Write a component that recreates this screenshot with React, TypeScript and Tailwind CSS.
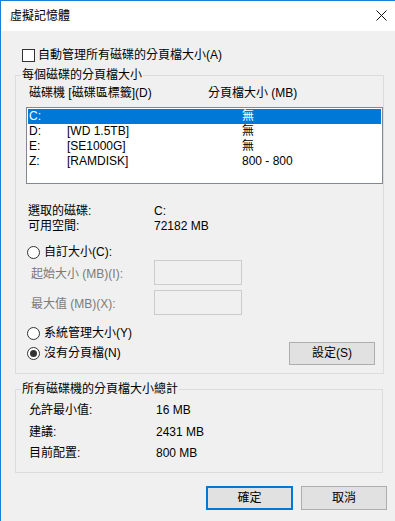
const FONT = "font-['Liberation_Sans','Noto_Sans_CJK_TC',sans-serif]";

function CheckBox() {
  return <span className="inline-block h-[13px] w-[13px] border border-[#333333] bg-white" />;
}

function Radio({ checked }: { checked?: boolean }) {
  return (
    <span className="flex h-[13px] w-[13px] items-center justify-center rounded-full border border-[#333333] bg-white">
      {checked && <span className="h-[7px] w-[7px] rounded-full bg-[#333333]" />}
    </span>
  );
}

function Button({ label, primary }: { label: string; primary?: boolean }) {
  return (
    <div
      className={
        primary
          ? "flex h-[24px] w-[87px] items-center justify-center border-2 border-[#0078d7] bg-[#e1e1e1]"
          : "flex h-[24px] w-[86px] items-center justify-center border border-[#adadad] bg-[#e1e1e1]"
      }
    >
      {label}
    </div>
  );
}

const drives = [
  { letter: "C:", label: "", size: "無" },
  { letter: "D:", label: "[WD 1.5TB]", size: "無" },
  { letter: "E:", label: "[SE1000G]", size: "無" },
  { letter: "Z:", label: "[RAMDISK]", size: "800 - 800" },
];

export default function App() {
  return (
    <div
      className={`${FONT} h-[521px] w-[395px] overflow-hidden border-l border-t border-[#1c7fd6] bg-[#f0f0f0] text-[12px] leading-[15px] text-black`}
    >
      {/* title bar */}
      <div className="flex h-[30px] items-center justify-between bg-white pl-[9px] pr-[8px]">
        <span className="leading-[16px]">虛擬記憶體</span>
        <svg width="11" height="11" viewBox="0 0 11 11" className="mb-[1px]">
          <path d="M0.5 0.5 L10.5 10.5 M10.5 0.5 L0.5 10.5" stroke="#111" strokeWidth="1" />
        </svg>
      </div>

      {/* auto manage */}
      <div className="ml-[21px] mt-[17px] flex h-[15px] items-center gap-[3px]">
        <CheckBox />
        <span>自動管理所有磁碟的分頁檔大小(A)</span>
      </div>

      {/* per-drive group */}
      <fieldset className="ml-[14px] mt-[5px] w-[368px] border border-[#dcdcdc] pb-[8px]">
        <legend className="ml-[5px] h-[15px] px-[1px]">每個磁碟的分頁檔大小</legend>
        <div className="mt-[2px] flex h-[16px] items-center pl-[13px]">
          <span className="w-[179px]">磁碟機 [磁碟區標籤](D)</span>
          <span>分頁檔大小 (MB)</span>
        </div>
        <div className="ml-[10px] mt-[6px] h-[77px] w-[357px] border border-[#828790] bg-white p-[1px]">
          {drives.map((d, i) => (
            <div
              key={d.letter}
              className={`flex h-[15px] items-center pl-[1px] ${i === 0 ? "bg-[#0078d7] text-white" : ""}`}
            >
              <span className="w-[38px]">{d.letter}</span>
              <span className="w-[175px]">{d.label}</span>
              <span>{d.size}</span>
            </div>
          ))}
        </div>

        <div className="mt-[20px] flex h-[15px] items-center pl-[12px]">
          <span className="w-[126px]">選取的磁碟:</span>
          <span>C:</span>
        </div>
        <div className="flex h-[15px] items-center pl-[12px]">
          <span className="w-[126px]">可用空間:</span>
          <span>72182 MB</span>
        </div>

        <div className="mt-[10px] flex h-[16px] items-center gap-[4px] pl-[11px]">
          <Radio />
          <span>自訂大小(C):</span>
        </div>
        <div className="flex h-[25px] items-center pl-[15px] text-[#7a7a7a]">
          <span className="w-[123px] pt-[4px]">起始大小 (MB)(I):</span>
          <span className="h-[25px] w-[88px] border border-[#cccccc] bg-[#f0f0f0]" />
        </div>
        <div className="mt-[5px] flex h-[25px] items-center pl-[15px] text-[#7a7a7a]">
          <span className="w-[123px] pt-[4px]">最大值 (MB)(X):</span>
          <span className="h-[25px] w-[88px] border border-[#cccccc] bg-[#f0f0f0]" />
        </div>

        <div className="mt-[10px] flex h-[16px] items-center gap-[4px] pl-[11px]">
          <Radio />
          <span>系統管理大小(Y)</span>
        </div>
        <div className="mt-[1px] flex h-[23px] items-center pl-[11px]">
          <div className="flex items-center gap-[4px]">
            <Radio checked />
            <span>沒有分頁檔(N)</span>
          </div>
          <div className="ml-auto mr-[8px] flex h-[23px] w-[86px] items-center justify-center border border-[#adadad] bg-[#e1e1e1]">
            設定(S)
          </div>
        </div>
      </fieldset>

      {/* totals group */}
      <fieldset className="ml-[14px] mt-[8px] w-[368px] border border-[#dcdcdc] pb-[11px]">
        <legend className="ml-[5px] h-[15px] px-[1px]">所有磁碟機的分頁檔大小總計</legend>
        <div className="mt-[5px] flex h-[16px] items-center pl-[13px]">
          <span className="w-[127px]">允許最小值:</span>
          <span>16 MB</span>
        </div>
        <div className="mt-[6px] flex h-[16px] items-center pl-[13px]">
          <span className="w-[127px]">建議:</span>
          <span>2431 MB</span>
        </div>
        <div className="mt-[5px] flex h-[16px] items-center pl-[13px]">
          <span className="w-[127px]">目前配置:</span>
          <span>800 MB</span>
        </div>
      </fieldset>

      <div className="mt-[13px] flex gap-[8px] pl-[205px]">
        <Button label="確定" primary />
        <Button label="取消" />
      </div>
    </div>
  );
}
